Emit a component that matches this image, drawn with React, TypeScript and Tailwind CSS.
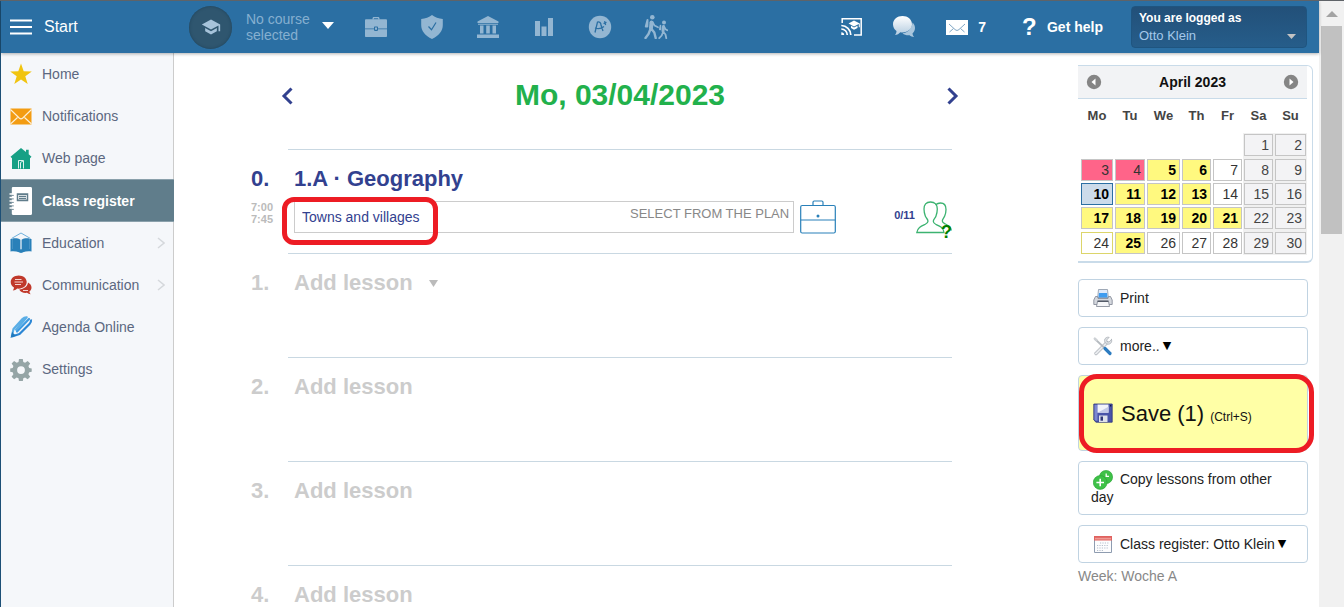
import React, { useState } from 'react';

type IconProps = { className?: string };

/* ---------- Top bar icons ---------- */

const GraduationIcon = ({ className = '' }: IconProps) => (
  <svg viewBox="0 0 24 24" fill="currentColor" className={className}>
    <path d="M5 13.2v4L12 21l7-3.8v-4L12 17l-7-3.8zM12 3 1 9l11 6 9-4.9V17h2V9L12 3z" />
  </svg>
);

const BriefcaseIcon = () => (
  <svg viewBox="0 0 24 24" fill="currentColor" className="w-6 h-6">
    <path d="M8.500 4.500V3.500c0-.8.5-1.500 1.500-1.500h4c1 0 1.500.7 1.500 1.500v1h-1.300V3.700c0-.3-.1-.5-.4-.5h-3.600c-.3 0-.4.2-.4.5v.8z" />
    <path d="M1 5.500C1 4.800 1.400 4.300 2.200 4.300h19.600c.8 0 1.200.5 1.200 1.200v8h-9v-1.200c0-.5-.3-.8-.8-.8h-2.400c-.5 0-.8.3-.8.8v1.200H1z" />
    <path d="M1 14.200h9v.9c0 .5.3.8.8.8h2.400c.5 0 .8-.3.8-.8v-.9h9v6.800c0 .7-.4 1-1 1H2c-.6 0-1-.3-1-1z" />
    <rect x="11" y="12.500" width="2" height="2.200" />
  </svg>
);

const ShieldIcon = () => (
  <svg viewBox="0 0 24 24" className="w-6 h-6">
    <path fill="currentColor" d="M12 0c2.800 2.200 6.800 3.600 10.800 3.900V10c0 6-4 10.800-10.800 14C5.200 20.800 1.200 16 1.200 10V3.900C5.200 3.600 9.200 2.200 12 0z" />
    <path fill="none" stroke="#2b6fa3" strokeWidth="1.200" d="m8.500 11.500 3 3.200L16 7.500" />
  </svg>
);

const BankIcon = () => (
  <svg viewBox="0 0 24 24" fill="currentColor" className="w-6 h-6">
    <path d="M12 1 1.500 6.500V8h21V6.500zM2 8.800h20v1H2zM4 10.500h3.500v8H4zM10.200 10.500h3.600v8h-3.600zM16.500 10.500H20v8h-3.500zM1 19.500h22V23H1z" />
  </svg>
);

const BarsIcon = () => (
  <svg viewBox="0 0 24 24" fill="currentColor" className="w-6 h-6">
    <path d="M3 6h5v15H3zM9.500 11.500h5V21h-5zM16 3h5v18h-5z" />
  </svg>
);

const GradeIcon = () => (
  <svg viewBox="0 0 24 24" className="w-6 h-6">
    <circle cx="12" cy="12" r="11.200" fill="currentColor" />
    <path fill="none" stroke="#2b6fa3" strokeWidth="1.300" d="M7 17.500 9.500 7c2-.6 3.500 1 3.500 3.200l2 5.800M7 13c2 .8 6 1 9-1.500M15.500 8.500l3-1.200M16.600 6.200l1 3.800" />
  </svg>
);

const HikersIcon = () => (
  <svg viewBox="0 0 24 24" className="w-6 h-6" fill="none" stroke="currentColor" strokeLinecap="round" strokeLinejoin="round">
    <circle cx="8.300" cy="2.300" r="2.300" fill="currentColor" stroke="none" />
    <path strokeWidth="4" d="M7.500 7.500 7 13" />
    <path strokeWidth="2.400" d="m6.500 14-2 5-3 4M7.500 14l2.800 3.500 1.400 5.500" />
    <path strokeWidth="1.700" d="m8.500 7 2 3.500 3.500 1.800" />
    <path strokeWidth="2" d="M3.500 5 1.800 11.500h1.500z" fill="currentColor" />
    <circle cx="20" cy="7.500" r="2" fill="currentColor" stroke="none" />
    <path strokeWidth="3" d="M19.500 11.500 19 16" />
    <path strokeWidth="1.800" d="m19 17-1.300 3.500-2.500 2.700M19.500 17l2 2.500.8 3.700M20 11.500l1.500 2.700 1.800 1" />
    <path strokeWidth="1.500" d="M16.500 10.500 15.700 14.500h.8z" fill="currentColor" />
  </svg>
);

const CastIcon = () => (
  <svg viewBox="0 0 24 20" className="w-6 h-5">
    <path fill="none" stroke="#fff" strokeWidth="1.500" d="M2.200 6V1.700h19V18H14" />
    <path fill="none" stroke="#fff" strokeWidth="1.700" d="M1.300 8.500A9.500 9.500 0 0 1 10.800 18M1.300 12a6 6 0 0 1 6 6" />
    <path fill="#fff" d="M1.300 15.200A2.900 2.900 0 0 1 4.200 18H1.300zM14 3.500 8.500 6.500l5.500 3 4.800-2.400v3.200h1V6.500zM11 8.700v2.200l3 1.800 3.500-1.800V8.700L14 10.500z" />
  </svg>
);

const ChatIcon = () => (
  <svg viewBox="0 0 24 24" className="w-6 h-6">
    <defs>
      <linearGradient id="chatFill" x1="0" y1="0" x2="0" y2="1">
        <stop offset="0" stopColor="#fff" />
        <stop offset="1" stopColor="#b4cce0" />
      </linearGradient>
    </defs>
    <path fill="#a9c6dd" d="M20.500 7.500c1.600 1.500 2.500 3.300 2.500 5.500 0 2.300-.9 4-2.500 5.500.2 1.500.7 2.500 1.700 3.500-2 0-3.400-.6-4.600-1.700-2.700.3-5.300-.3-7.100-2 5.300-.5 9.500-4.500 10-10.800z" />
    <path fill="url(#chatFill)" d="M10.500 1c5.200 0 9.500 3.500 9.500 8.300 0 4.700-4.300 8.200-9.500 8.200-.8 0-1.500-.1-2.200-.2-1.300 1.600-3 2.500-5.300 2.700 1-1.300 1.500-2.500 1.500-4C2.400 14.500 1 12.200 1 9.300 1 4.500 5.300 1 10.500 1z" />
  </svg>
);

const HEADER_ICONS = [
  { label: 'Briefcase', Icon: BriefcaseIcon },
  { label: 'Safety', Icon: ShieldIcon },
  { label: 'School', Icon: BankIcon },
  { label: 'Statistics', Icon: BarsIcon },
  { label: 'Grades', Icon: GradeIcon },
  { label: 'Attendance', Icon: HikersIcon },
];

/* ---------- Sidebar icons ---------- */

const sidebarIcons: { [key: string]: React.ReactNode } = {
  home: (
    <path fill="#f1c40f" d="m12 1.500 2.700 7.700 8.100.2-6.500 4.900 2.400 7.800-6.700-4.700-6.700 4.700 2.400-7.800-6.500-4.900 8.100-.2z" />
  ),
  notifications: (
    <>
      <path fill="#f39c12" d="M1.500 4.500h21v16h-21z" />
      <path fill="none" stroke="#fdf0d8" strokeWidth="1.100" d="m1.500 5.500 8.700 8.500c1.300 1.200 2.300 1.200 3.600 0l8.700-8.500M1.500 20l7-6.500M22.500 20l-7-6.500" />
    </>
  ),
  web: (
    <>
      <path fill="#16a085" d="m12 2 5 4V3.800h2.700v4.500l2.800 2.400-1.500 1.600V23H3V12.300l-1.500-1.600z" />
      <path fill="#16a085" stroke="#dff2ee" d="M9.500 22.500v-8h5v8M14 15l-2.500 1.500v6" />
    </>
  ),
  register: (
    <>
      <path fill="#fff" d="M4 0h17.500c1 0 1.500.5 1.500 1.500v21c0 1-.5 1.500-1.500 1.500H4c-.8 0-1.200-.5-1.200-1.200V1.200C2.800.5 3.200 0 4 0z" />
      <path stroke="#fff" strokeWidth="1.200" d="M.5 6h3M.5 9h3M.5 12h3M.5 15h3M.5 18h3" />
      <path stroke="#607d8b" strokeWidth=".8" d="M2.800 7.200h2M2.800 10.200h2M2.800 13.200h2M2.800 16.200h2M2.800 19.200h2" />
      <path fill="#fff" stroke="#607d8b" strokeWidth="1.500" d="M8.500 6h10v5.500h-10z" />
      <path stroke="#607d8b" d="M10 8h7M10 9.800h7" />
    </>
  ),
  education: (
    <>
      <path fill="none" stroke="#6eb0dc" d="m2.500 7.500 9.500-5.500 9.500 5.500" />
      <path fill="#2980b9" d="M1.500 8h2.200v10h7.700l.6 1 .6-1h7.700V8h2.200v12.500c-3.500-.4-6 0-8.500.8h-4c-2.500-.8-5-1.200-8.500-.8z" />
      <path fill="#2980b9" d="M3.500 7.500c3.500-.4 6 0 7.900 1.200V19c-2-1-4.500-1.200-7.900-.8zM20.500 7.500c-3.500-.4-6 0-7.900 1.200V19c2-1 4.500-1.200 7.900-.8z" />
      <path fill="#2980b9" d="M10.500 20h3v1.800h-3z" />
    </>
  ),
  communication: (
    <>
      <path fill="#c0392b" d="M9.700 2.500c4.500 0 8 2.800 8 6.600s-3.500 6.600-8 6.600l-1.400-.1c-1.200 1.200-2.800 1.900-4.500 2 .8-1 1.200-1.900 1.200-3C3 13.400 1.700 11.400 1.700 9.100c0-3.800 3.500-6.600 8-6.600z" />
      <path fill="#c0392b" d="M19 9.500c2 1 3.500 2.800 3.500 5 0 1.700-.8 3.100-2.100 4.100.1 1 .5 1.800 1.300 2.700-1.500-.1-2.700-.6-3.700-1.500-3.500.5-6.700-.9-7.800-3.300C15 16 18.800 13.200 19 9.500z" />
      <path stroke="#f5d5d1" strokeWidth="1.200" d="M6 6.500h6.500M5.500 9H14M6 11.500h6M14 17.500h5" />
    </>
  ),
  agenda: (
    <>
      <path fill="none" stroke="#5aaee6" strokeWidth="2.200" strokeLinejoin="round" d="M2.800 21.500 4.500 14 13.500 4c1.500-1.500 3-1.800 4.200-1.700L6.500 15.500" />
      <path fill="none" stroke="#3d9be2" strokeWidth="2.200" strokeLinecap="round" d="M8 16.500 20 4" />
      <path fill="none" stroke="#2b86d4" strokeWidth="2.200" strokeLinejoin="round" d="M3 21.500 10.500 19 20.500 9c1.200-1.200 1.800-2.700 1.500-4.500" />
      <path fill="#1f78bd" d="M3.300 16.500c.5 2 2 3.300 4.500 3.800L1.500 23z" />
    </>
  ),
  settings: (
    <path fill="#95a5a6" fillRule="evenodd" d="m10 2-.5 3-1.800.8-2.600-1.800L2.600 6.500l1.800 2.600L3.700 11l-2.500.5v3.300l2.500.5.7 1.900-1.800 2.600 2.500 2.500 2.600-1.800 1.800.8.500 3h3.800l.5-3 1.800-.8 2.600 1.800 2.500-2.500-1.800-2.600.8-1.900 2.500-.5v-3.300l-2.500-.5-.8-1.900 1.800-2.600L18.700 4l-2.600 1.800-1.800-.8-.5-3zM12 9.200a3.900 3.900 0 1 1 0 7.800 3.900 3.900 0 0 1 0-7.800z" />
  ),
};

const MENU = [
  { key: 'home', label: 'Home' },
  { key: 'notifications', label: 'Notifications' },
  { key: 'web', label: 'Web page' },
  { key: 'register', label: 'Class register', active: true },
  { key: 'education', label: 'Education', nested: true },
  { key: 'communication', label: 'Communication', nested: true },
  { key: 'agenda', label: 'Agenda Online' },
  { key: 'settings', label: 'Settings' },
];

/* ---------- Calendar ---------- */

type Day = { n: number; kind?: 'pink' | 'yellow' | 'today' | 'weekend' | 'outlined' };

const WEEKDAYS = ['Mo', 'Tu', 'We', 'Th', 'Fr', 'Sa', 'Su'];

const WEEKS: (Day | null)[][] = [
  [null, null, null, null, null, { n: 1, kind: 'weekend' }, { n: 2, kind: 'weekend' }],
  [{ n: 3, kind: 'pink' }, { n: 4, kind: 'pink' }, { n: 5, kind: 'yellow' }, { n: 6, kind: 'yellow' }, { n: 7 }, { n: 8, kind: 'weekend' }, { n: 9, kind: 'weekend' }],
  [{ n: 10, kind: 'today' }, { n: 11, kind: 'yellow' }, { n: 12, kind: 'yellow' }, { n: 13, kind: 'yellow' }, { n: 14 }, { n: 15, kind: 'weekend' }, { n: 16, kind: 'weekend' }],
  [{ n: 17, kind: 'yellow' }, { n: 18, kind: 'yellow' }, { n: 19, kind: 'yellow' }, { n: 20, kind: 'yellow' }, { n: 21, kind: 'yellow' }, { n: 22, kind: 'weekend' }, { n: 23, kind: 'weekend' }],
  [{ n: 24, kind: 'outlined' }, { n: 25, kind: 'yellow' }, { n: 26 }, { n: 27 }, { n: 28 }, { n: 29, kind: 'weekend' }, { n: 30, kind: 'weekend' }],
];

const dayStyles = {
  plain: 'bg-white border-[#c5c5c5] text-[#333]',
  pink: 'bg-[#ff6489] border-[#c5c5c5] text-[#333]',
  yellow: 'bg-[#fff97f] border-[#c5c5c5] text-black font-bold',
  today: 'bg-[#ccdbea] border-[#2b6fa3] text-black font-bold',
  weekend: 'bg-[#f3f3f5] border-[#c5c5c5] text-[#444]',
  outlined: 'bg-white border-[#dcd56a] text-[#333]',
};

const MonthArrow = ({ dir }: { dir: 'prev' | 'next' }) => (
  <button aria-label={dir === 'prev' ? 'Previous month' : 'Next month'}>
    <svg viewBox="0 0 16 16" className="w-4 h-4">
      <circle cx="8" cy="8" r="7.200" fill="#858585" />
      <path fill="#fff" d={dir === 'prev' ? 'M9.500 4.500v7L5.500 8z' : 'M6.500 4.500v7l4-3.500z'} />
    </svg>
  </button>
);

const Calendar = () => (
  <div className="w-[235px] rounded-r-md border-y border-r border-b-2 border-[#c9dbe9]">
    <div className="flex items-center justify-between h-8 mr-[5px] px-2 box-content bg-[#f2f3f5] border-b border-[#c9dbe9]">
      <MonthArrow dir="prev" />
      <span className="text-sm font-bold text-[#111]">April 2023</span>
      <MonthArrow dir="next" />
    </div>
    <table className="table-fixed w-[227px] h-[156px] ml-[2px] mb-[6px]">
      <colgroup>
        <col className="w-[34px]" />
        <col className="w-[32px]" />
        <col className="w-[35px]" />
        <col className="w-[31px]" />
        <col className="w-[31px]" />
        <col className="w-[31px]" />
        <col className="w-[33px]" />
      </colgroup>
      <thead>
        <tr className="h-[34px]">
          {WEEKDAYS.map((d) => (
            <th key={d} className="text-[13px] font-bold text-[#444]">{d}</th>
          ))}
        </tr>
      </thead>
      <tbody>
        {WEEKS.map((week, w) => (
          <tr key={w}>
            {week.map((day, i) => (
              <td key={i} className={`px-px ${i > 4 ? 'bg-[#f0f0f0]' : ''}`}>
                {day && (
                  <button className={`block w-full h-[22px] pr-[3px] border text-right text-sm leading-5 ${dayStyles[day.kind ?? 'plain']}`}>
                    {day.n}
                  </button>
                )}
              </td>
            ))}
          </tr>
        ))}
      </tbody>
    </table>
  </div>
);

/* ---------- Side panel buttons ---------- */

const PrinterIcon = () => (
  <svg viewBox="0 0 20 20" className="w-5 h-5 shrink-0">
    <path fill="#dfeafb" stroke="#8a95a5" strokeWidth=".8" d="M5.500 1.500h9l.8 8H4.700z" />
    <path fill="#3f9cf0" d="M6 5h8l.5 4.500h-9z" />
    <path fill="#d5d8de" stroke="#7c8391" strokeWidth=".8" d="M2.500 8.500h2l.5 2h10l.5-2h2l1.700 3.500v4.500H.8V12z" />
    <path fill="#f5f6f8" stroke="#7c8391" strokeWidth=".8" d="M4.500 13.500h11l1 5h-13z" />
    <path fill="#454c5a" d="M4.500 12.500h11v1.300h-11z" />
  </svg>
);

const ToolsIcon = () => (
  <svg viewBox="0 0 20 20" className="w-5 h-5 shrink-0" fill="none" strokeLinecap="round">
    <path stroke="#a5abb2" strokeWidth="3.200" d="M3 17.500 14 6.500" />
    <path stroke="#e9ebee" strokeWidth="2.200" d="M3 17.500 14 6.500" />
    <path fill="#dde0e3" stroke="#a5abb2" strokeWidth=".7" d="M18.500 3.500 16 6l-2-.3L13.700 4l2.500-2.700c-2-.6-4.700.6-4.700 3 0 2.500 1.700 4 4 3.900 2.300-.1 4-2.500 3-4.700z" />
    <path stroke="#b5babf" strokeWidth="1.800" d="m2 3 8.500 8" />
    <path stroke="#cdd1d5" strokeWidth="2.500" d="m1.800 2.700 1.500 1.500" />
    <path stroke="#2d7cc0" strokeWidth="3.200" d="m12 12.500 5 5" />
  </svg>
);

const FloppyIcon = () => (
  <svg viewBox="0 0 20 20" className="w-5 h-5 shrink-0">
    <path fill="#4a54a8" stroke="#2c347c" strokeWidth=".8" d="M.8 1h18.400v18.200H3L.8 17z" />
    <path fill="#7c88d0" d="M1.500 1.700h3v16H3l-1.500-1z" />
    <path fill="#f1f3fb" d="M4.500 1.500h11v8.200h-11z" />
    <path fill="#c3c9e6" d="m4.500 9.700 11-6v6z" />
    <path fill="#dfe2ea" d="M6 12.500h8.500V19H6z" />
    <path fill="#303878" d="M7.500 13.500H10v4.200H7.500z" />
    <path fill="#10164a" d="M17 2h1.300v1.500H17z" />
  </svg>
);

const CopyPlusIcon = () => (
  <svg viewBox="0 0 20 20" className="inline-block w-5 h-5 -my-1 ml-[2px] mr-[3px] align-middle">
    <circle cx="13" cy="7" r="6.600" fill="#3fc148" stroke="#27a232" strokeWidth=".6" />
    <path fill="none" stroke="#fff" strokeWidth="1.300" d="M13.200 3.500v2.800H16" />
    <circle cx="7.200" cy="12.500" r="6.900" fill="#3fc148" stroke="#27a232" strokeWidth=".6" />
    <path stroke="#fff" strokeWidth="1.600" d="M7.200 8.700v7.600M3.400 12.500H11" />
  </svg>
);

const CalendarSheetIcon = () => (
  <svg viewBox="0 0 20 20" className="w-5 h-5 shrink-0">
    <path fill="#fdfdfe" stroke="#8e9cb0" d="M1.500 2.500h17v16h-17z" />
    <path fill="#e0625f" d="M1 2h18v4.500H1z" />
    <path fill="#f09a95" d="M2 3.800h16v1.700H2z" />
    <path stroke="#b5bfcc" strokeWidth="1.200" strokeDasharray="1.200 1.200" d="M7 9h9M4 11.500h12M4 14h12M4 16.500h7" />
  </svg>
);

const PanelButton = ({ icon, label, menu }: { icon: React.ReactNode; label: string; menu?: boolean }) => (
  <button className="flex items-center w-full h-[38px] px-[14px] border border-[#c0d3e2] rounded bg-white text-sm text-[#222]">
    {icon}
    <span className="ml-[7px]">{label}</span>
    {menu && <span className="ml-[3px] font-['DejaVu_Sans',sans-serif] text-[11px] text-black">▼</span>}
  </button>
);

/* ---------- Lessons ---------- */

const CaseOutlineIcon = () => (
  <svg viewBox="0 0 36 34" className="w-9 h-[34px]" fill="none" stroke="#2980b9" strokeWidth="1.200">
    <rect x=".7" y="5.500" width="34.600" height="27.500" rx="1.500" />
    <path d="M13 5.500V2.200c0-.8.500-1.200 1.200-1.200h7.600c.7 0 1.200.4 1.200 1.200v3.300M.7 20h34.600" />
    <circle cx="18" cy="16" r="1.500" fill="#2980b9" stroke="none" />
  </svg>
);

const StudentsIcon = () => (
  <svg viewBox="0 0 36 34" className="w-9 h-[34px]" fill="none" stroke="#3cb371" strokeWidth="1.300">
    <path d="M14.500 2C10 2 8 5 8 9c0 3 .6 5 1.300 7 .8 2.200 2.700 3 2.700 5.300 0 1.700-1 2.300-3 3.200-4 1.700-7.500 3-8.200 8H28c-.7-5-4-6.300-8-8-2-1-2.700-1.500-2.700-3.200 0-2.300 2-3.100 2.700-5.300.7-2 1.300-4 1.300-7 0-4-2.300-7-6.800-7z" />
    <path d="M19.500 4.700C21 3.600 22.700 3 24.500 3 28 3 30 5.500 30 9.500c0 3-.6 4.800-1.300 6.500-.8 2-2.400 3-2.400 5 0 1.500 1 2 2.700 2.800 3 1.400 5.800 2.500 6.300 6.700" />
  </svg>
);

const Lesson = ({ index, children }: { index: number; children: React.ReactNode }) => (
  <li className="flex min-h-[104px]">
    <div className={`w-[37px] pt-[18px] shrink-0 text-[22px] leading-6 font-bold ${index === 0 ? 'text-[#32418f]' : 'text-[#ccc]'}`}>
      {index}.
      {index === 0 && (
        <div className="w-5 mt-[10px] text-right text-[11px] leading-3 text-[#bbb]">
          7:00<br />7:45
        </div>
      )}
    </div>
    <div className="flex-1 pl-[6px] pt-[17px] border-t border-[#c9d8e2]">{children}</div>
  </li>
);

const Header = () => (
  <header className="relative z-10 flex items-center h-[52px] shrink-0 bg-[#2b6fa3] text-white shadow-[0_1px_3px_rgba(0,0,0,0.3)]">
    <button className="flex items-center gap-3 w-[188px] pl-[9px] text-base">
      <svg viewBox="0 0 22 16" className="w-[22px] h-4">
        <path stroke="#fff" strokeWidth="2" d="M0 1.500h22M0 8h22M0 14.500h22" />
      </svg>
      Start
    </button>
    <button className="flex items-center text-left text-sm leading-4 text-[#86afd0]">
      <span className="flex items-center justify-center w-[43px] h-[43px] mr-[14px] rounded-full bg-[#2f566f] shadow-[inset_0_0_3px_#1f4258] text-[#a6c3da]">
        <GraduationIcon className="w-5 h-5" />
      </span>
      <span className="w-[76px]">No course selected</span>
      <svg viewBox="0 0 12 7" className="w-3 h-[7px] mb-1"><path fill="#fff" d="M0 0h12L6 7z" /></svg>
    </button>
    <nav className="flex gap-8 ml-[30px] text-[#93b6d2]">
      {HEADER_ICONS.map(({ label, Icon }) => (
        <a key={label} href="#" aria-label={label}><Icon /></a>
      ))}
    </nav>
    <div className="flex items-center ml-auto mr-3 text-sm font-bold">
      <button aria-label="Cast" className="mr-7"><CastIcon /></button>
      <button aria-label="Chat" className="mr-[30px]"><ChatIcon /></button>
      <button className="flex items-center gap-[10px] mr-9">
        <svg viewBox="0 0 22 15" className="w-[22px] h-[15px]">
          <path fill="#fff" d="M0 0h22v15H0z" />
          <path fill="none" stroke="#7fa6c4" d="m3 4 6 5.500c1.400 1.200 2.600 1.200 4 0L19 4M3.500 12l4-3.500M18.500 12l-4-3.500" />
        </svg>
        7
      </button>
      <button className="flex items-center gap-[13px] mr-7">
        <span className="w-3 text-2xl leading-6">?</span>
        Get help
      </button>
      <button className="flex items-center justify-between w-44 h-[42px] pl-[7px] pr-[10px] rounded-sm border border-[#1f5580] bg-linear-to-b from-[#225079] to-[#265d8a] text-left">
        <span className="text-xs leading-[18px]">
          You are logged as
          <span className="block text-[13px] font-normal text-[#a4c8ea]">Otto Klein</span>
        </span>
        <svg viewBox="0 0 9 5" className="w-[9px] h-[5px] mt-[18px]"><path fill="#c3c3c3" d="M0 0h9L4.500 5z" /></svg>
      </button>
    </div>
  </header>
);

const Sidebar = () => (
  <nav className="w-[173px] shrink-0 bg-[#f5f7fa] border-r border-[#ccc]">
    {MENU.map(({ key, label, active, nested }) => (
      <a
        key={key}
        href="#"
        className={`flex items-center gap-[9px] pl-2 text-sm ${
          active
            ? 'h-[43px] -mr-px bg-[#607d8b] border-y border-[#8aa0ab] text-white font-bold'
            : 'h-[42px] text-[#5b6780]'
        }`}
      >
        <svg viewBox="0 0 24 24" className={active ? 'w-6 h-[28px]' : 'w-6 h-6'} preserveAspectRatio="none">
          {sidebarIcons[key]}
        </svg>
        {label}
        {nested && (
          <svg viewBox="0 0 8 12" className="w-2 h-3 ml-auto mr-2"><path fill="none" stroke="#d5d8dc" strokeWidth="1.500" d="m1 1 6 5-6 5" /></svg>
        )}
      </a>
    ))}
  </nav>
);

const App: React.FC = () => {
  const [topic, setTopic] = useState('Towns and villages');

  return (
    <div className="flex h-screen overflow-hidden border-t border-[#5f6368] bg-white font-['Liberation_Sans',Arial,sans-serif]">
      <div className="flex flex-col flex-1 min-w-0 border-l border-[#1c4f76]">
        <Header />
        <div className="flex flex-1 min-h-0">
          <Sidebar />

          <main className="flex-1 min-w-0">
            <div className="flex items-center justify-between max-w-[678px] mx-auto pt-6 pb-9">
              <button aria-label="Previous day">
                <svg viewBox="0 0 12 18" className="w-3 h-[18px] mt-[2px]"><path fill="none" stroke="#32418f" strokeWidth="3" d="M10.500 1.500 3 9l7.500 7.500" /></svg>
              </button>
              <h1 className="text-3xl font-bold text-[#22b14c]">Mo, 03/04/2023</h1>
              <button aria-label="Next day">
                <svg viewBox="0 0 12 18" className="w-3 h-[18px] mt-[2px]"><path fill="none" stroke="#32418f" strokeWidth="3" d="M1.500 1.500 9 9l-7.500 7.500" /></svg>
              </button>
            </div>

            <ol className="max-w-[738px] mx-auto pr-[37px]">
              <Lesson index={0}>
                <h2 className="text-[22px] leading-6 font-bold text-[#32418f]">1.A · Geography</h2>
                <div className="flex items-center mt-[9px]">
                  <div className="relative flex flex-1 h-8 border border-[#ccc]">
                    <input
                      aria-label="Lesson topic"
                      className="flex-1 min-w-0 pl-[7px] text-sm text-[#32418f] outline-none"
                      value={topic}
                      onChange={(e) => setTopic(e.target.value)}
                    />
                    <button className="self-start pt-[2px] pr-1 text-[13px] text-[#888]">SELECT FROM THE PLAN</button>
                    {/* highlight around the topic */}
                    <span className="absolute -top-[5px] -left-[13px] w-[156px] h-[48px] rounded-xl border-[5px] border-[#ed1c24] pointer-events-none" />
                  </div>
                  <button aria-label="Materials" className="ml-[6px]"><CaseOutlineIcon /></button>
                  <button className="relative flex items-center ml-[58px] text-[11px] font-bold text-[#32418f]">
                    <span className="mr-px mb-1">0/11</span>
                    <StudentsIcon />
                    <span className="absolute right-0 -bottom-2 text-lg leading-5 text-[#008000]">?</span>
                  </button>
                </div>
              </Lesson>
              {[1, 2, 3, 4].map((n) => (
                <Lesson key={n} index={n}>
                  <button className="flex items-center gap-4 text-[22px] leading-6 font-bold text-[#ccc]">
                    Add lesson
                    {n === 1 && <svg viewBox="0 0 9 7" className="w-[9px] h-[7px]"><path fill="#bbb" d="M0 0h9L4.500 7z" /></svg>}
                  </button>
                </Lesson>
              ))}
            </ol>
          </main>

          <aside className="w-[253px] shrink-0 pl-3 pt-3">
            <Calendar />
            <div className="flex flex-col gap-[10px] w-[230px] mt-4">
              <PanelButton icon={<PrinterIcon />} label="Print" />
              <PanelButton icon={<ToolsIcon />} label="more.." menu />
              <div className="relative">
                <button className="flex items-center w-full h-[76px] px-[14px] border border-[#c0d3e2] rounded bg-[#ffffa6] text-[#222]">
                  <FloppyIcon />
                  <span className="flex items-baseline gap-[6px] ml-2 text-[22px] text-[#111]">
                    Save (1) <span className="text-xs">(Ctrl+S)</span>
                  </span>
                </button>
                {/* highlight around the save button */}
                <span className="absolute -top-px left-px w-[235px] h-[79px] rounded-[18px] border-[5px] border-[#ed1c24] pointer-events-none" />
              </div>
              <button className="block w-full px-3 py-2 border border-[#c0d3e2] rounded bg-white text-left text-sm leading-[18px] text-[#222]">
                <CopyPlusIcon /> Copy lessons from other day
              </button>
              <PanelButton icon={<CalendarSheetIcon />} label="Class register: Otto Klein" menu />
            </div>
            <p className="mt-1 text-sm leading-[18px] text-[#888]">Week: Woche A</p>
          </aside>
        </div>
      </div>

      {/* Scrollbar */}
      <div className="w-[25px] shrink-0 flex flex-col items-center bg-[#f1f1f1]">
        <svg viewBox="0 0 12 6" className="w-3 h-[6px] mt-[10px] mb-[9px]"><path fill="#a3a3a3" d="M0 6h12L6 0z" /></svg>
        <div className="w-[21px] h-[208px] bg-[#c1c1c1]" />
      </div>
    </div>
  );
};

export default App;
